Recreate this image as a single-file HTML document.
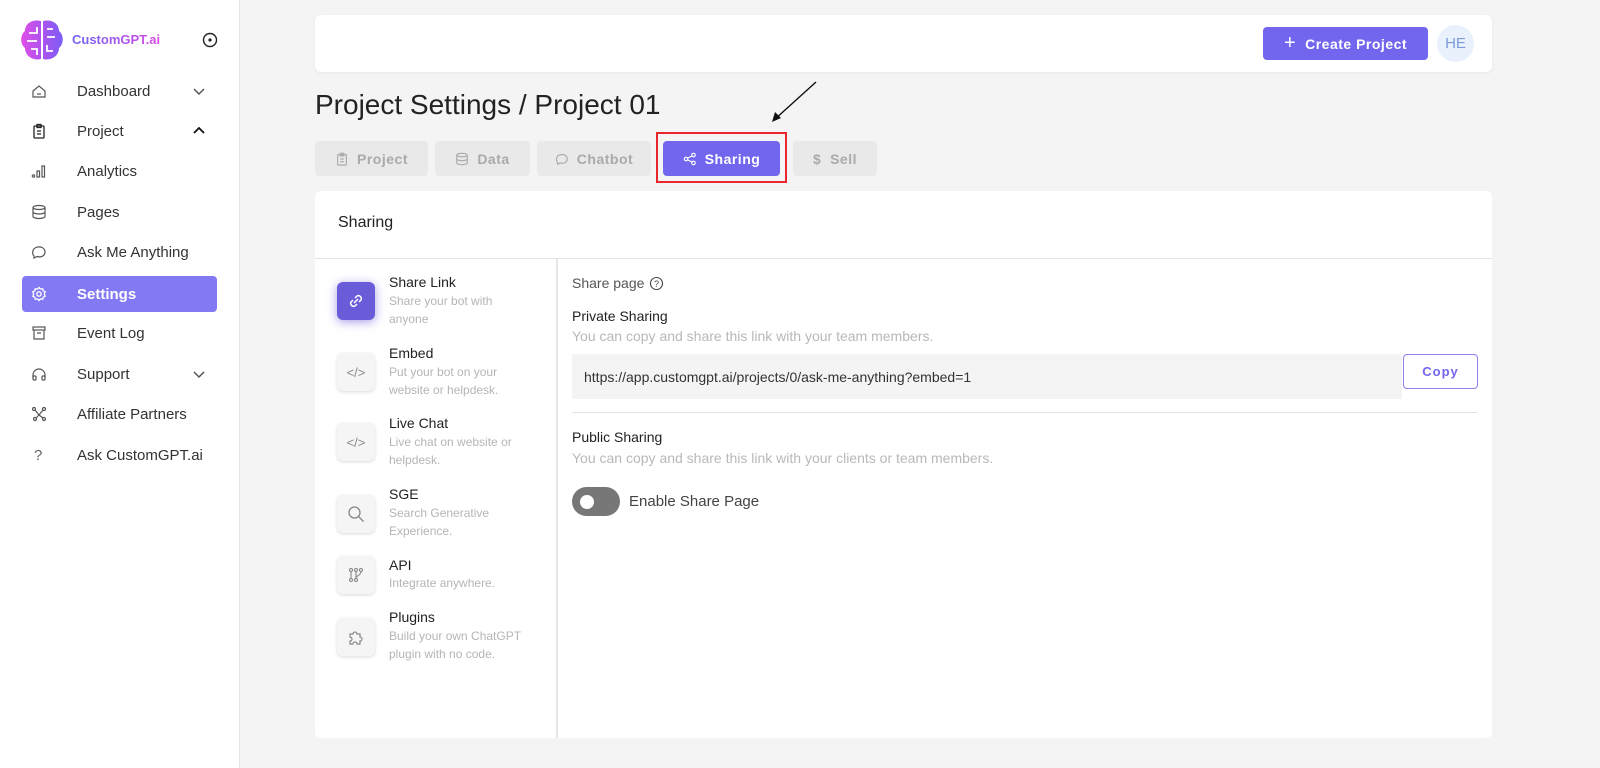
<!DOCTYPE html>
<html><head><meta charset="utf-8"><style>
*{margin:0;padding:0;box-sizing:border-box}
body{width:1600px;height:768px;background:#f4f4f4;font-family:"Liberation Sans",sans-serif;position:relative;overflow:hidden;color:#222}
.a{position:absolute}
.side{left:0;top:0;width:240px;height:768px;background:#fff;border-right:1px solid #e6e6e6}
.nav{position:absolute;left:22px;width:195px;height:36px;font-size:15px;color:#333;display:flex;align-items:center}
.nav svg{position:absolute;left:9px}
.nav span{position:absolute;left:55px}
.nav .chev{position:absolute;left:170px}
.tab{position:absolute;top:141px;height:35px;background:#e9e9e9;border-radius:4px;color:#aaa;font-size:14px;font-weight:bold;letter-spacing:.5px;display:flex;align-items:center;justify-content:center;gap:8px}
.li{position:absolute;left:337px;width:38px;height:38px;border-radius:6px;background:#f5f5f5;box-shadow:0 1px 3px rgba(0,0,0,.15);display:flex;align-items:center;justify-content:center}
.lt{position:absolute;left:389px;font-size:14px;color:#222}
.ld{position:absolute;left:389px;font-size:12px;color:#b5b5b5;line-height:18px;width:150px}
</style></head><body>
<div class="a side"></div>
<svg class="a" style="left:19px;top:17px" width="46" height="46" viewBox="0 0 46 46"><defs><linearGradient id="g" x1="0" x2="1"><stop offset="0" stop-color="#e04de8"/><stop offset="1" stop-color="#7b5cf5"/></linearGradient></defs><path d="M22 4C14 2 6 6 6 14C1 18 1 27 6 31C6 39 14 44 22 42Z M24 4C32 2 40 6 40 14C45 18 45 27 40 31C40 39 32 44 24 42Z" fill="url(#g)"/><g stroke="#fff" stroke-width="1.8" fill="none"><path d="M10 16h8v-6M8 24h10M12 32h6v6M28 12h6M28 20h8M28 28v6h6"/></g></svg>
<div class="a" style="left:72px;top:32px;font-size:13px;font-weight:bold;background:linear-gradient(90deg,#6e63f3,#d94be6);-webkit-background-clip:text;color:transparent">CustomGPT.ai</div>
<svg class="a" style="left:202px;top:32px" width="16" height="16"><circle cx="8" cy="8" r="6.5" stroke="#222" stroke-width="1.4" fill="none"/><circle cx="8" cy="8" r="1.6" fill="#222"/></svg>

<div class="nav" style="top:73px"><svg width="16" height="16" viewBox="0 0 16 16" fill="none" stroke="#555" stroke-width="1.2"><path d="M2 8L8 3l6 5v6H2z"/><path d="M6 11h4"/></svg><span>Dashboard</span><svg class="chev" width="14" height="14" viewBox="0 0 14 14" fill="none" stroke="#555" stroke-width="1.5"><path d="M2 5l5 5 5-5"/></svg></div>
<div class="nav" style="top:113px"><svg width="16" height="16" viewBox="0 0 16 16" fill="none" stroke="#222" stroke-width="1.3"><rect x="3" y="3" width="10" height="12" rx="1"/><rect x="6" y="1.5" width="4" height="3"/><path d="M6 8h4M6 11h4"/></svg><span>Project</span><svg class="chev" width="14" height="14" viewBox="0 0 14 14" fill="none" stroke="#111" stroke-width="1.8"><path d="M2 9l5-5 5 5"/></svg></div>
<div class="nav" style="top:153px"><svg width="16" height="16" viewBox="0 0 16 16" fill="none" stroke="#555" stroke-width="1.2"><circle cx="2.5" cy="13" r="1.2"/><rect x="6" y="8" width="2.5" height="6"/><rect x="11" y="3" width="2.5" height="11"/></svg><span>Analytics</span></div>
<div class="nav" style="top:194px"><svg width="16" height="16" viewBox="0 0 16 16" fill="none" stroke="#555" stroke-width="1.2"><ellipse cx="8" cy="3.5" rx="6" ry="2"/><path d="M2 3.5v9c0 1 3 2 6 2s6-1 6-2v-9M2 8c0 1 3 2 6 2s6-1 6-2"/></svg><span>Pages</span></div>
<div class="nav" style="top:234px"><svg width="16" height="16" viewBox="0 0 16 16" fill="none" stroke="#555" stroke-width="1.2"><path d="M3 12C1 10 1 5 5 3.5c4-1.5 9 0 9 4.5s-5 5.5-8 4.5L3 14z"/></svg><span>Ask Me Anything</span></div>
<div class="a" style="left:22px;top:276px;width:195px;height:36px;background:#837af3;border-radius:4px"></div>
<div class="nav" style="top:276px;color:#fff;font-weight:bold"><svg width="16" height="16" viewBox="0 0 16 16" fill="none" stroke="#fff" stroke-width="1.3"><circle cx="8" cy="8" r="2.2"/><path d="M8 1.5l1.5 1.6 2.2-.4.5 2.1 2 1-.9 2.2.9 2.2-2 1-.5 2.1-2.2-.4L8 14.5l-1.5-1.6-2.2.4-.5-2.1-2-1 .9-2.2-.9-2.2 2-1 .5-2.1 2.2.4z"/></svg><span>Settings</span></div>
<div class="nav" style="top:315px"><svg width="16" height="16" viewBox="0 0 16 16" fill="none" stroke="#555" stroke-width="1.2"><rect x="2" y="2" width="12" height="3"/><path d="M3 5v9h10V5M6 8h4"/></svg><span>Event Log</span></div>
<div class="nav" style="top:356px"><svg width="16" height="16" viewBox="0 0 16 16" fill="none" stroke="#555" stroke-width="1.2"><path d="M2 12V9a6 6 0 0112 0v3"/><rect x="2" y="10" width="3" height="4" rx="1"/><rect x="11" y="10" width="3" height="4" rx="1"/></svg><span>Support</span><svg class="chev" width="14" height="14" viewBox="0 0 14 14" fill="none" stroke="#555" stroke-width="1.5"><path d="M2 5l5 5 5-5"/></svg></div>
<div class="nav" style="top:396px"><svg width="16" height="16" viewBox="0 0 16 16" fill="none" stroke="#555" stroke-width="1.2"><circle cx="3" cy="3" r="1.5"/><circle cx="13" cy="3" r="1.5"/><circle cx="4" cy="13" r="1.5"/><circle cx="13" cy="13" r="1.5"/><path d="M4 4l4 5-3 3M12 4L8 9l4 3"/></svg><span>Affiliate Partners</span></div>
<div class="nav" style="top:437px"><span style="left:12px;color:#666">?</span><span>Ask CustomGPT.ai</span></div>

<div class="a" style="left:315px;top:15px;width:1177px;height:57px;background:#fff;border-radius:6px;box-shadow:0 1px 3px rgba(0,0,0,.06)"></div>
<div class="a" style="left:1263px;top:27px;width:165px;height:33px;background:#7266ee;border-radius:4px;color:#fff;font-size:14px;font-weight:bold;letter-spacing:.5px;display:flex;align-items:center;justify-content:center"><span style="font-size:20px;font-weight:normal;margin-right:9px">+</span>Create Project</div>
<div class="a" style="left:1437px;top:25px;width:37px;height:37px;border-radius:50%;background:#e9f1fd;color:#7d9ad8;font-size:15px;display:flex;align-items:center;justify-content:center">HE</div>

<div class="a" style="left:315px;top:89px;font-size:28px;color:#222">Project Settings / Project 01</div>
<svg class="a" style="left:770px;top:80px" width="48" height="44"><path d="M46 2L4 40" stroke="#111" stroke-width="1.4"/><path d="M2 42l3-10 6 6z" fill="#111"/></svg>

<div class="tab" style="left:315px;width:113px"><svg width="14" height="14" viewBox="0 0 16 16" fill="none" stroke="#aaa" stroke-width="1.3"><rect x="3" y="3" width="10" height="12" rx="1"/><rect x="6" y="1.5" width="4" height="3"/><path d="M6 8h4M6 11h4"/></svg>Project</div>
<div class="tab" style="left:435px;width:95px"><svg width="14" height="14" viewBox="0 0 16 16" fill="none" stroke="#aaa" stroke-width="1.3"><ellipse cx="8" cy="3.5" rx="6" ry="2"/><path d="M2 3.5v9c0 1 3 2 6 2s6-1 6-2v-9M2 8c0 1 3 2 6 2s6-1 6-2"/></svg>Data</div>
<div class="tab" style="left:537px;width:114px"><svg width="14" height="14" viewBox="0 0 16 16" fill="none" stroke="#aaa" stroke-width="1.3"><path d="M3 12C1 10 1 5 5 3.5c4-1.5 9 0 9 4.5s-5 5.5-8 4.5L3 14z"/></svg>Chatbot</div>
<div class="a" style="left:656px;top:132px;width:131px;height:51px;border:2px solid #e8262b"></div>
<div class="tab" style="left:663px;width:117px;background:#7266ee;color:#fff"><svg width="14" height="14" viewBox="0 0 16 16" fill="none" stroke="#fff" stroke-width="1.3"><circle cx="3.5" cy="8" r="2"/><circle cx="12" cy="3.5" r="2"/><circle cx="12" cy="12.5" r="2"/><path d="M5.3 7l5-2.6M5.3 9l5 2.6"/></svg>Sharing</div>
<div class="tab" style="left:793px;width:84px">$ &nbsp;Sell</div>

<div class="a" style="left:315px;top:191px;width:1177px;height:547px;background:#fff;border-radius:6px"></div>
<div class="a" style="left:338px;top:214px;font-size:16px;color:#222">Sharing</div>
<div class="a" style="left:315px;top:258px;width:1177px;height:1px;background:#e2e2e2"></div>
<div class="a" style="left:556px;top:258px;width:2px;height:480px;background:#e6e6e6"></div>

<div class="li" style="top:282px;background:#6a5bd8;box-shadow:0 2px 10px rgba(106,91,216,.6)"><svg width="18" height="18" viewBox="0 0 18 18" fill="none" stroke="#fff" stroke-width="1.5"><path d="M8 6l2-2a3 3 0 014 4l-2 2M10 12l-2 2a3 3 0 01-4-4l2-2M7 11l4-4"/></svg></div>
<div class="lt" style="top:274px">Share Link</div><div class="ld" style="top:292px">Share your bot with<br>anyone</div>
<div class="li" style="top:353px"><span style="color:#888;font-size:13px">&lt;/&gt;</span></div>
<div class="lt" style="top:345px">Embed</div><div class="ld" style="top:363px">Put your bot on your<br>website or helpdesk.</div>
<div class="li" style="top:423px"><span style="color:#888;font-size:13px">&lt;/&gt;</span></div>
<div class="lt" style="top:415px">Live Chat</div><div class="ld" style="top:433px">Live chat on website or<br>helpdesk.</div>
<div class="li" style="top:495px"><svg width="18" height="18" viewBox="0 0 18 18" fill="none" stroke="#888" stroke-width="1.3"><circle cx="7.5" cy="7.5" r="5.5"/><path d="M11.5 11.5l5 5"/></svg></div>
<div class="lt" style="top:486px">SGE</div><div class="ld" style="top:504px">Search Generative<br>Experience.</div>
<div class="li" style="top:556px"><svg width="16" height="16" viewBox="0 0 16 16" fill="none" stroke="#888" stroke-width="1.1"><circle cx="3" cy="3" r="1.5"/><circle cx="8" cy="3" r="1.5"/><circle cx="13" cy="3" r="1.5"/><circle cx="3" cy="13" r="1.5"/><circle cx="8" cy="13" r="1.5"/><path d="M3 4.5v7M8 4.5v7M13 4.5c0 4-5 4-5 7"/></svg></div>
<div class="lt" style="top:557px">API</div><div class="ld" style="top:574px">Integrate anywhere.</div>
<div class="li" style="top:618px"><svg width="18" height="18" viewBox="0 0 18 18" fill="none" stroke="#888" stroke-width="1.2"><path d="M3 6h3a2 2 0 114 0h3v3a2 2 0 110 4v3h-3a2 2 0 10-4 0H3v-3a2 2 0 100-4z"/></svg></div>
<div class="lt" style="top:609px">Plugins</div><div class="ld" style="top:627px">Build your own ChatGPT<br>plugin with no code.</div>

<div class="a" style="left:572px;top:275px;font-size:14px;color:#555">Share page</div>
<svg class="a" style="left:649px;top:276px" width="15" height="15"><circle cx="7.5" cy="7.5" r="6" stroke="#444" stroke-width="1.1" fill="none"/><text x="7.5" y="11" font-size="9" text-anchor="middle" fill="#444" font-family="Liberation Sans">?</text></svg>
<div class="a" style="left:572px;top:308px;font-size:14px;color:#222">Private Sharing</div>
<div class="a" style="left:572px;top:328px;font-size:14px;color:#b8b8b8">You can copy and share this link with your team members.</div>
<div class="a" style="left:572px;top:354px;width:830px;height:45px;background:#f4f4f4"></div>
<div class="a" style="left:584px;top:369px;font-size:14px;color:#333">https://app.customgpt.ai/projects/0/ask-me-anything?embed=1</div>
<div class="a" style="left:1403px;top:354px;width:75px;height:35px;border:1px solid #8d84f1;border-radius:4px;color:#7266ee;font-size:13px;font-weight:bold;letter-spacing:1px;display:flex;align-items:center;justify-content:center">Copy</div>
<div class="a" style="left:572px;top:412px;width:905px;height:1px;background:#e2e2e2"></div>
<div class="a" style="left:572px;top:429px;font-size:14px;color:#222">Public Sharing</div>
<div class="a" style="left:572px;top:450px;font-size:14px;color:#b8b8b8">You can copy and share this link with your clients or team members.</div>
<div class="a" style="left:572px;top:487px;width:48px;height:29px;border-radius:15px;background:#777"></div>
<div class="a" style="left:580px;top:495px;width:14px;height:14px;border-radius:50%;background:#fff"></div>
<div class="a" style="left:629px;top:493px;font-size:15px;color:#444">Enable Share Page</div>
</body></html>
